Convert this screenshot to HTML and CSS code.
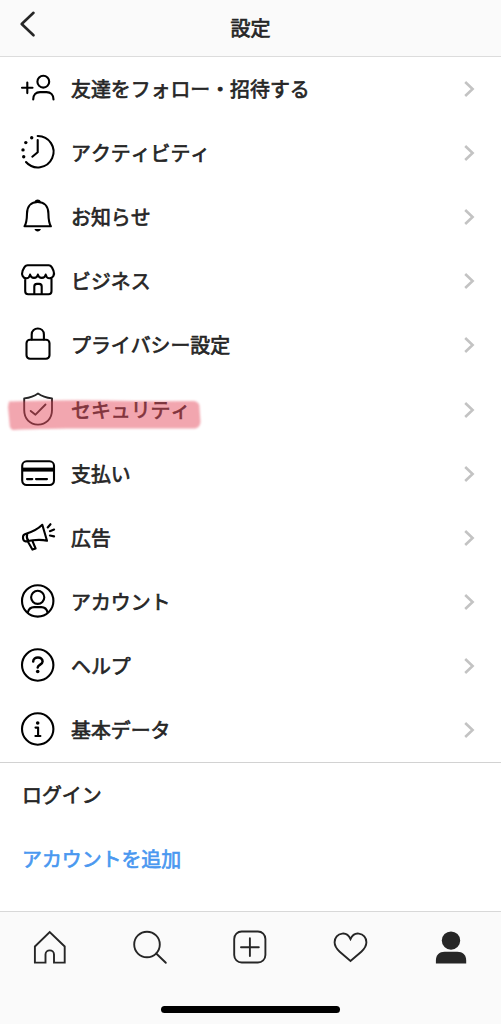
FILE: index.html
```html
<!DOCTYPE html>
<html lang="ja">
<head>
<meta charset="utf-8">
<title>設定</title>
<link rel="stylesheet" href="styles.css">
</head>
<body>
<div class="screen">
  <header class="header">
    <svg class="back" viewBox="0 0 20 30"><path d="M16.500 4.800L4.700 16L16.500 27.300"/></svg>
    <h1 class="title">設定</h1>
  </header>
  <main class="content">
    <ul class="menu">
      <li class="row">
        <svg class="icon" viewBox="0 0 40 40"><path d="M4 18.700h10.500M9.300 13.500v10.600M15.200 30.500C15.200 25.500 18 23.100 22 23.100h6.500c4 0 7 2.700 7 7.400"/><circle cx="25.300" cy="12.700" r="5.900"/></svg>
        <span class="label">友達をフォロー・招待する</span>
        <svg class="chevron" viewBox="0 0 12 20"><path d="M2.200 3L9.600 10L2.200 17"/></svg>
      </li>
      <li class="row">
        <svg class="icon" viewBox="0 0 40 40"><path d="M19.700 3A15.700 15.700 0 1 1 8 29M19.700 7v12.200l-5.400 4.500"/><g class="solid"><circle cx="13.700" cy="4.700" r="1.700"/><circle cx="7.800" cy="9.600" r="1.700"/><circle cx="5" cy="16.900" r="1.700"/><circle cx="5.700" cy="23.700" r="1.700"/></g></svg>
        <span class="label">アクティビティ</span>
        <svg class="chevron" viewBox="0 0 12 20"><path d="M2.200 3L9.600 10L2.200 17"/></svg>
      </li>
      <li class="row">
        <svg class="icon" viewBox="0 0 40 40"><path d="M6.500 29.300C8.600 26 8.900 22.500 9 16.500C9.100 9 13.500 5 19.700 5s10.600 4 10.700 11.500c.1 6 .4 9.500 2.500 12.800z"/><path class="solid" d="M16.600 5c.6-3.200 5.600-3.200 6.200 0zM16.500 32h6.400c-.6 3.200-5.800 3.200-6.400 0z"/></svg>
        <span class="label">お知らせ</span>
        <svg class="chevron" viewBox="0 0 12 20"><path d="M2.200 3L9.600 10L2.200 17"/></svg>
      </li>
      <li class="row">
        <svg class="icon" viewBox="0 0 40 40"><path d="M9.500 4.200h21.200c1.700 0 2.600 1 3.400 2.600l1.400 3c1.600 3.800-.6 7.400-3.900 7.400-2.200 0-3.500-1.300-3.900-3.600-.4 2.200-1.800 3.300-3.900 3.300s-3.500-1.100-3.900-3.300c-.4 2.200-1.800 3.300-3.900 3.300s-3.500-1.100-3.900-3.300c-.4 2.300-1.700 3.600-3.900 3.600-3.300 0-5-3.600-3.600-7.400l1.500-3c.8-1.600 1.700-2.600 3.500-2.600zM7.200 17v13.300c0 2 1 3 3 3h20.300c2 0 3-1 3-3V17M16.300 33v-7.500c0-1.700 1-2.600 2.600-2.600h2.200c1.600 0 2.600.9 2.600 2.600V33"/></svg>
        <span class="label">ビジネス</span>
        <svg class="chevron" viewBox="0 0 12 20"><path d="M2.200 3L9.600 10L2.200 17"/></svg>
      </li>
      <li class="row">
        <svg class="icon" viewBox="0 0 40 40"><rect x="8.500" y="14.700" width="23" height="19" rx="3.500"/><path d="M13.700 14.500V9.500c0-8 12.200-8 12.200 0v5"/></svg>
        <span class="label">プライバシー設定</span>
        <svg class="chevron" viewBox="0 0 12 20"><path d="M2.200 3L9.600 10L2.200 17"/></svg>
      </li>
      <li class="row marked">
        <svg class="icon thin" viewBox="0 0 40 40"><path d="M20 3.500c-3.400 2.600-8.500 4.300-13.800 4.900v11.700C6.200 29 12 34.600 20 34.600s14-5.600 14-14.500V8.400C28.700 7.800 23.500 6.100 20 3.500zM12.700 20.900l4.800 3.800L27.500 14.500"/></svg>
        <span class="label">セキュリティ</span>
        <svg class="chevron" viewBox="0 0 12 20"><path d="M2.200 3L9.600 10L2.200 17"/></svg>
        <svg class="marker" viewBox="0 0 196 34"><path d="M3 3.500Q60 1.500 100 2.500T188 3Q194 4 193.500 10L194.500 24Q194 29.500 189 30.500L60 30.500Q20 31 7 32Q3.500 31 3.500 25L2 9z"/></svg>
      </li>
      <li class="row">
        <svg class="icon" viewBox="0 0 40 40"><rect x="4.200" y="7.300" width="31.800" height="23.700" rx="4.500"/><path class="band" d="M4 15.600h32"/><path d="M9 25.100h5.300M18 25.100h11"/></svg>
        <span class="label">支払い</span>
        <svg class="chevron" viewBox="0 0 12 20"><path d="M2.200 3L9.600 10L2.200 17"/></svg>
      </li>
      <li class="row">
        <svg class="icon" viewBox="0 0 40 40"><path d="M24.300 6.700C19.500 11.500 13 14.300 6.800 16.200c-2.800 1-2.300 7.300.9 7.200C14.500 22 21.500 21 29 22.700zM9.300 15.800c-.8 2.500-.4 5.300 1 7.300M9.800 23.600l4.600 8 3.200-1.100-3.200-7.700M29.700 9.500l2.800-3.300M31.900 13.200l4.200-1.700M31.900 17.500l4.200.9"/></svg>
        <span class="label">広告</span>
        <svg class="chevron" viewBox="0 0 12 20"><path d="M2.200 3L9.600 10L2.200 17"/></svg>
      </li>
      <li class="row">
        <svg class="icon" viewBox="0 0 40 40"><circle cx="19.700" cy="18.900" r="15.700"/><circle cx="19.700" cy="15.300" r="6.600"/><path d="M9.800 30.500c.8-3.500 3-5.400 6.300-5.400h7.200c3.300 0 5.500 1.900 6.300 5.400"/></svg>
        <span class="label">アカウント</span>
        <svg class="chevron" viewBox="0 0 12 20"><path d="M2.200 3L9.600 10L2.200 17"/></svg>
      </li>
      <li class="row">
        <svg class="icon" viewBox="0 0 40 40"><circle cx="19.700" cy="19" r="15.700"/><path class="bold" d="M15.200 15.500c.1-5.400 9.400-5.400 9.400.1 0 3.100-4.900 2.800-4.900 6"/><circle class="solid" cx="19.700" cy="25.500" r="1.800"/></svg>
        <span class="label">ヘルプ</span>
        <svg class="chevron" viewBox="0 0 12 20"><path d="M2.200 3L9.600 10L2.200 17"/></svg>
      </li>
      <li class="row">
        <svg class="icon" viewBox="0 0 40 40"><circle cx="19.700" cy="19" r="15.700"/><path class="serif" d="M17.500 17.600h2.600v8.200M17.400 26h5"/><circle class="solid" cx="19.700" cy="13" r="1.800"/></svg>
        <span class="label">基本データ</span>
        <svg class="chevron" viewBox="0 0 12 20"><path d="M2.200 3L9.600 10L2.200 17"/></svg>
      </li>
    </ul>
    <section class="login">
      <h2 class="login-item">ログイン</h2>
      <a class="login-item link">アカウントを追加</a>
    </section>
  </main>
  <nav class="tabs">
    <div class="tab-row">
      <svg class="tab" viewBox="0 0 40 40"><path d="M4.900 19.500L19.700 5L34.700 19.500V35.600H24V27.500c0-5.500-8.500-5.500-8.500 0v8.100H4.900z"/></svg>
      <svg class="tab" viewBox="0 0 40 40"><circle cx="17" cy="17.500" r="12.800"/><path d="M26.200 26.500l9.600 9.300"/></svg>
      <svg class="tab" viewBox="0 0 40 40"><rect x="4.200" y="4.500" width="31.200" height="31" rx="7.500"/><path d="M11 20.200h17.800M19.900 11.300v17.800"/></svg>
      <svg class="tab" viewBox="0 0 40 40"><path d="M19.500 12c1.800-4 5-5.800 8.300-5.400 4.500.5 7.600 4.200 7.600 8.700 0 4.200-2.200 6.800-5.100 9.400L19.500 34L8.700 24.700C5.800 22.100 3.600 19.500 3.600 15.300c0-4.500 3.100-8.200 7.600-8.700C14.500 6.200 17.700 8 19.500 12z"/></svg>
      <svg class="tab filled" viewBox="0 0 40 40"><circle cx="20" cy="13.600" r="9.200"/><path d="M4.900 36.500v-3c0-5.500 3.500-8.800 8.800-8.800h12.600c5.300 0 8.900 3.300 8.900 8.800v3z"/></svg>
    </div>
    <div class="home-bar"></div>
  </nav>
</div>
</body>
</html>
```
FILE: styles.css
```css
* {
  box-sizing: border-box;
}

body {
  margin: 0;
  background: #fff;
  color: #262626;
  font-family: "Noto Sans CJK JP", sans-serif;
  font-size: 19.9px;
  font-kerning: none;
}

.screen {
  display: flex;
  flex-direction: column;
  height: 1024px;
  width: 501px;
  overflow: hidden;
}

svg {
  display: block;
  flex: none;
  fill: none;
  stroke-linecap: round;
  stroke-linejoin: round;
}

.header {
  display: grid;
  grid-template-columns: 60px 1fr 60px;
  height: 57px;
  background: #fafafa;
  border-bottom: 1px solid #dcdcdc;
}

.back {
  width: 20px;
  height: 30px;
  margin: 8px 0 0 17px;
  stroke: #262626;
  stroke-width: 2.6;
}

.title,
.label,
.login-item {
  font-weight: 400;
  -webkit-text-stroke: 0.7px currentColor;
}

.title {
  margin: 0;
  font-size: 20px;
  line-height: 55px;
  text-align: center;
}

.content {
  flex: 1;
}

.menu {
  margin: 0;
  padding: 0;
  list-style: none;
  border-bottom: 1px solid #d2d2d2;
}

.row {
  position: relative;
  display: flex;
  align-items: center;
  height: 64.1px;
  padding: 0 26px 0 18px;
}

.icon {
  width: 40px;
  height: 40px;
  stroke: #000;
  stroke-width: 2.1;
}

.thin {
  stroke: #262626;
  stroke-width: 1.9;
}

.solid {
  fill: #000;
  stroke: none;
}

.bold {
  stroke-width: 2.5;
}

.serif {
  stroke-width: 2.1;
}

.band {
  stroke-width: 4;
  stroke-linecap: butt;
}

.label {
  flex: 1;
  padding-left: 13px;
  line-height: 30px;
}

.chevron {
  width: 12px;
  height: 20px;
  stroke: #c3c3c3;
  stroke-width: 2.6;
  stroke-linecap: butt;
  stroke-linejoin: miter;
}

.marker {
  position: absolute;
  left: 6px;
  top: 21px;
  width: 196px;
  height: 34px;
  fill: rgba(228, 70, 88, 0.48);
  filter: blur(1px);
}

.login-item {
  display: block;
  height: 64px;
  margin: 0;
  padding-left: 22px;
  font-size: 19.9px;
  line-height: 64px;
}

.link {
  color: #4a98f0;
}

.tabs {
  display: flex;
  flex-direction: column;
  align-items: center;
  height: 113px;
  background: #fafafa;
  border-top: 1px solid #d8d8d8;
}

.tab-row {
  display: grid;
  grid-template-columns: repeat(5, 1fr);
  justify-items: center;
  width: 501px;
  padding-top: 15px;
}

.tab {
  width: 40px;
  height: 40px;
  stroke: #262626;
  stroke-width: 1.9;
  stroke-linejoin: miter;
}

.filled {
  fill: #262626;
  stroke: none;
}

.home-bar {
  width: 179px;
  height: 7px;
  margin-top: 39px;
  border-radius: 4px;
  background: #000;
}
```
